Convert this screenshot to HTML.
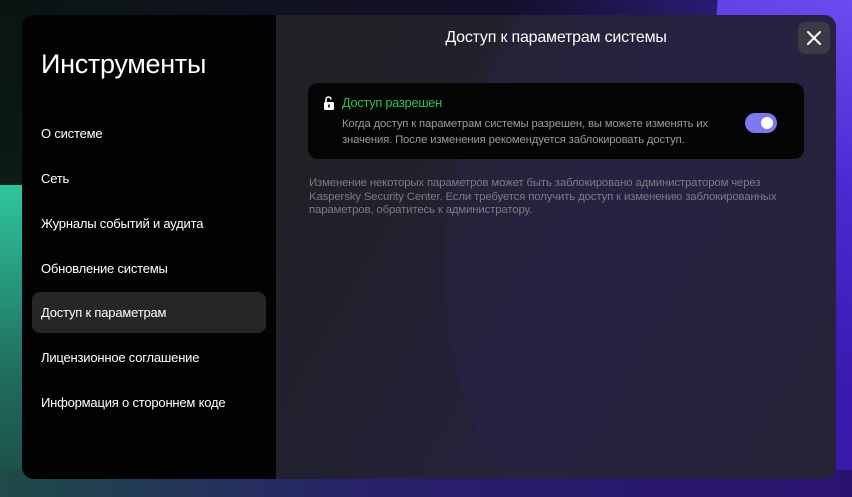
<!DOCTYPE html>
<html><head><meta charset="utf-8"><style>
*{margin:0;padding:0;box-sizing:border-box}
html,body{width:852px;height:497px;overflow:hidden}
body{position:relative;font-family:"Liberation Sans",sans-serif;
background:linear-gradient(180deg,#0a1512 0%,#0b1a17 35%,#1d4a40 60%,#1f3f3a 100%);}
.bgl{position:absolute;left:0;top:185px;width:60px;height:312px;background:linear-gradient(180deg,#2fc69c,#1f6e5c 60%,#1d4a42);}
.bgb{position:absolute;left:0;top:470px;width:852px;height:27px;background:linear-gradient(90deg,#1f4a48 0%,#28206a 45%,#2a1370 100%)}
.bgr{position:absolute;right:0;top:0;width:420px;height:497px;background:linear-gradient(200deg,#6a4cf0 0%,#4a2ad0 30%,#3a1ab0 60%,#3a1a9a 100%);clip-path:polygon(68% 0,100% 0,100% 100%,60% 100%);}
.bgt{position:absolute;left:0;top:0;width:852px;height:15px;background:linear-gradient(90deg,#0a1512,#150f2c 60%,#3a22a0)}
.panel{position:absolute;left:22px;top:15px;width:814px;height:464px;border-radius:12px;overflow:hidden;
background:radial-gradient(circle 450px at 870px 250px,rgba(60,40,120,0.12) 99%,rgba(0,0,0,0) 100%),linear-gradient(120deg,#1f2024 0%,#202127 35%,#24213a 65%,#23212f 100%);}
.side{position:absolute;left:0;top:0;width:254px;height:464px;background:#030303}
h1{position:absolute;left:19px;top:34px;color:#fff;font-size:27px;font-weight:normal;letter-spacing:-0.3px}
.item{position:absolute;left:10px;width:234px;height:41px;line-height:41px;padding-left:9px;color:#fff;font-size:13px;letter-spacing:-0.2px;border-radius:8px}
.sel{background:#262626}
.title{position:absolute;left:254px;width:560px;top:14px;text-align:center;color:#fff;font-size:16px;letter-spacing:-0.2px}
.close{position:absolute;left:776px;top:7px;width:32px;height:32px;border-radius:7px;background:#3b3a47}
.card{position:absolute;left:286px;top:68px;width:496px;height:76px;border-radius:10px;background:#050505}
.g{position:absolute;left:34px;top:13px;color:#29c05a;font-size:12.7px;letter-spacing:-0.2px}
.d{position:absolute;left:34px;top:33px;color:#9a9a9a;font-size:11.3px;line-height:16px;letter-spacing:-0.15px;width:390px}
.tg{position:absolute;left:437px;top:30px;width:32px;height:20px;border-radius:10px;background:#7c78f2}
.tg i{position:absolute;right:4px;top:4px;width:12px;height:12px;border-radius:6px;background:#fff}
.note{position:absolute;left:287px;top:162px;color:#7b7b84;font-size:11.4px;line-height:13.5px;letter-spacing:-0.15px;width:500px}
</style></head><body>
<div class="bgt"></div><div class="bgl"></div><div class="bgr"></div><div class="bgb"></div>
<div class="panel">
<div class="side">
<h1>Инструменты</h1>
<div class="item" style="top:98px">О системе</div>
<div class="item" style="top:143px">Сеть</div>
<div class="item" style="top:188px">Журналы событий и аудита</div>
<div class="item" style="top:233px">Обновление системы</div>
<div class="item sel" style="top:277px">Доступ к параметрам</div>
<div class="item" style="top:322px">Лицензионное соглашение</div>
<div class="item" style="top:367px">Информация о стороннем коде</div>
</div>
<div class="title">Доступ к параметрам системы</div>
<div class="close"><svg width="32" height="32" viewBox="0 0 32 32"><path d="M10 10L22 22M22 10L10 22" stroke="#fff" stroke-width="2" stroke-linecap="round"/></svg></div>
<div class="card">
<svg style="position:absolute;left:15px;top:13px" width="12" height="14" viewBox="0 0 12 14"><path d="M3 6V3.5a2.5 2.5 0 0 1 5 0" stroke="#fff" stroke-width="1.6" fill="none"/><rect x="1" y="6" width="10" height="8" rx="1.5" fill="#fff"/><rect x="5.2" y="8.5" width="1.6" height="3" fill="#050505"/></svg>
<div class="g">Доступ разрешен</div>
<div class="d">Когда доступ к параметрам системы разрешен, вы можете изменять их значения. После изменения рекомендуется заблокировать доступ.</div>
<div class="tg"><i></i></div>
</div>
<div class="note">Изменение некоторых параметров может быть заблокировано администратором через Kaspersky Security Center. Если требуется получить доступ к изменению заблокированных параметров, обратитесь к администратору.</div>
</div>
</body></html>
